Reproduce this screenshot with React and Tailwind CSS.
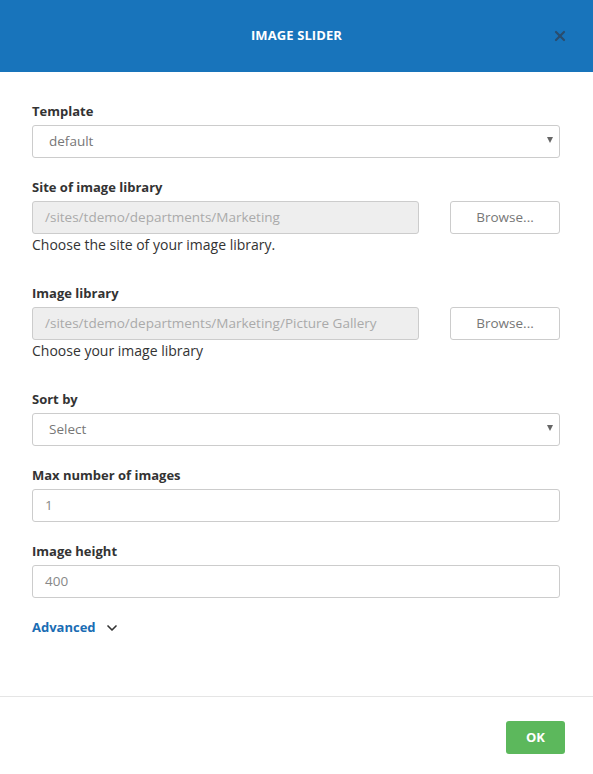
import { X, ChevronDown } from 'lucide-react'

const font = { fontFamily: '"Open Sans", "Noto Sans", sans-serif' }

function Label({ children }) {
  return <label className="block text-[13px] font-bold text-[#333] leading-[18px] mb-[5px]">{children}</label>
}

function SelectBox({ value }) {
  return (
    <div className="relative h-[33px] border border-[#ccc] rounded-[3px] bg-white flex items-center pl-4 text-[13.5px] text-[#777]">
      {value}
      <span className="absolute right-[6px] top-[11px] w-0 h-0 border-l-[3px] border-r-[3px] border-t-[6px] border-l-transparent border-r-transparent border-t-[#666]" />
    </div>
  )
}

function TextBox({ value, disabled }) {
  return (
    <div
      className={`h-[33px] border border-[#ccc] rounded-[3px] flex items-center pl-3 text-[13.5px] ${
        disabled ? 'bg-[#eee] text-[#aaa]' : 'bg-white text-[#888]'
      }`}
    >
      {value}
    </div>
  )
}

function BrowseRow({ value, help }) {
  return (
    <div>
      <div className="flex gap-[31px]">
        <div className="flex-1">
          <TextBox value={value} disabled />
        </div>
        <button className="w-[110px] h-[33px] border border-[#ccc] rounded-[3px] bg-white text-[13.5px] text-[#777]">
          Browse...
        </button>
      </div>
      <p className="text-[14px] text-[#333] leading-[20px] mt-[1px]">{help}</p>
    </div>
  )
}

export default function App() {
  return (
    <div className="w-[593px] h-[774px] bg-white flex flex-col" style={font}>
      {/* Header */}
      <div className="h-[72px] bg-[#1874bb] flex items-center justify-center relative shrink-0">
        <h1 className="text-[13px] font-bold text-white tracking-[0.1px]">IMAGE SLIDER</h1>
        <X size={16} strokeWidth={3.2} className="absolute right-[25px] top-[28px] text-[#2a4d6e]" />
      </div>

      {/* Body */}
      <div className="flex-1 pl-8 pr-[33px] pt-[30px]">
        <Label>Template</Label>
        <SelectBox value="default" />

        <div className="mt-[20px]">
          <Label>Site of image library</Label>
          <BrowseRow value="/sites/tdemo/departments/Marketing" help="Choose the site of your image library." />
        </div>

        <div className="mt-[29px]">
          <Label>Image library</Label>
          <BrowseRow
            value="/sites/tdemo/departments/Marketing/Picture Gallery"
            help="Choose your image library"
          />
        </div>

        <div className="mt-[29px]">
          <Label>Sort by</Label>
          <SelectBox value="Select" />
        </div>

        <div className="mt-[20px]">
          <Label>Max number of images</Label>
          <TextBox value="1" />
        </div>

        <div className="mt-[20px]">
          <Label>Image height</Label>
          <TextBox value="400" />
        </div>

        <div className="mt-[20px] flex items-center gap-[8px] text-[13px] font-bold text-[#1a6db4]">
          Advanced
          <ChevronDown size={16} strokeWidth={2.5} className="text-[#333]" />
        </div>
      </div>

      {/* Footer */}
      <div className="h-[78px] border-t border-[#e5e5e5] flex items-start justify-end pr-[28px] pt-[24px] shrink-0">
        <button className="w-[59px] h-[33px] rounded-[3px] bg-[#5cb85c] text-white text-[13px] font-bold">OK</button>
      </div>
    </div>
  )
}
